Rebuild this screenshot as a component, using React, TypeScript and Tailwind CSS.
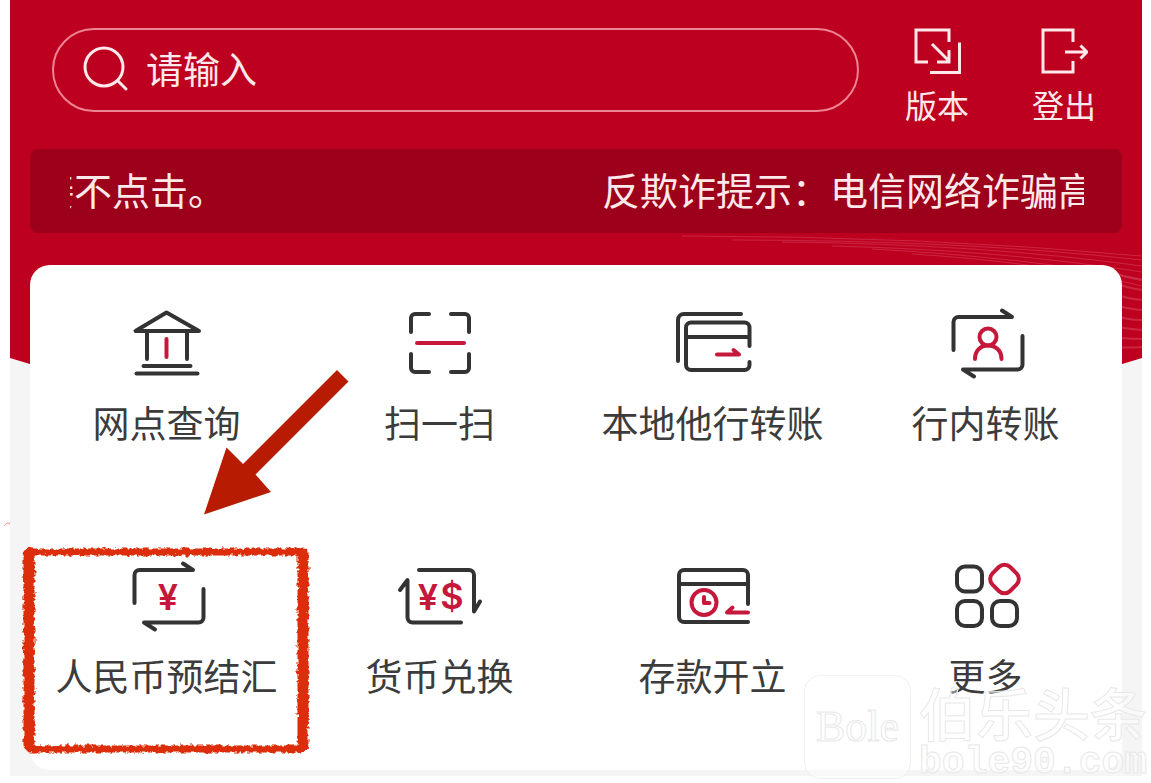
import React from 'react';

const INK = '#333333';
const RED = '#c5183a';

interface IconProps {
  children: React.ReactNode;
}

function TileIcon({ children }: IconProps) {
  return (
    <svg
      className="h-[72px] w-20 overflow-visible"
      viewBox="0 0 80 72"
      fill="none"
      stroke={INK}
      strokeWidth="4"
      strokeLinecap="round"
      strokeLinejoin="round"
      aria-hidden="true"
    >
      {children}
    </svg>
  );
}

const BranchIcon = () => (
  <TileIcon>
    <path d="M39.5 6.5 8.5 25h63.500L39.500 6.500Z" />
    <path d="M20 25v28M60 25v28M16.500 60h47M9.500 67.500h61" />
    <path d="M39.500 33v18" stroke={RED} />
  </TileIcon>
);

const ScanIcon = () => (
  <TileIcon>
    <path d="M11 26V12a4 4 0 0 1 4-4h14M51 8h14a4 4 0 0 1 4 4v14M69 48v14a4 4 0 0 1-4 4H51M29 66H15a4 4 0 0 1-4-4V48" />
    <path d="M17 37h47" stroke={RED} />
  </TileIcon>
);

const LocalTransferIcon = () => (
  <TileIcon>
    <path d="M5 55V14a6 6 0 0 1 6-6h57" />
    <path d="M76.500 40V21.500a5 5 0 0 0-5-5H18a5 5 0 0 0-5 5V59a5 5 0 0 0 5 5h53.500a5 5 0 0 0 5-5v-3M13 31h63" />
    <path d="M44 48.500h22L60.500 44" stroke={RED} />
  </TileIcon>
);

const LoopFrame = () => (
  <path d="M7.500 44V16a5 5 0 0 1 5-5H66L56 4.500M76.500 30v28.500a5 5 0 0 1-5 5H17L28 70.500" />
);

const InnerTransferIcon = () => (
  <TileIcon>
    <LoopFrame />
    <g stroke={RED}>
      <circle cx="42" cy="31" r="8.500" />
      <path d="M29 53c0-8.500 5.500-13.500 13-13.500S55.500 44.500 55.500 53" />
    </g>
  </TileIcon>
);

const SettleIcon = () => (
  <TileIcon>
    <LoopFrame />
    <text x="41" y="51" textAnchor="middle" fill={RED} stroke="none" className="font-['Inter',sans-serif] text-[36px] font-semibold">
      ¥
    </text>
  </TileIcon>
);

const ExchangeIcon = () => (
  <TileIcon>
    <path d="M19 11h50a5 5 0 0 1 5 5v36.500l6-10M0 31l7.500-10v37.500a5 5 0 0 0 5 5H61" />
    <g fill={RED} stroke="none" className="font-['Inter',sans-serif] text-[36px] font-semibold">
      <text x="28" y="51" textAnchor="middle">¥</text>
      <text x="52" y="50" textAnchor="middle">$</text>
    </g>
  </TileIcon>
);

const DepositIcon = () => (
  <TileIcon>
    <path d="M75 45V16a5 5 0 0 0-5-5H11a5 5 0 0 0-5 5v42a5 5 0 0 0 5 5h64M6 25h69" />
    <g stroke={RED}>
      <circle cx="31" cy="43.500" r="12.500" />
      <path d="M31 38v6h5.500M75 53.500H54l5.500-5" />
    </g>
  </TileIcon>
);

const MoreIcon = () => (
  <TileIcon>
    <rect x="11" y="7.500" width="25" height="25" rx="8" />
    <rect x="11" y="42" width="25" height="25" rx="8" />
    <rect x="46" y="42" width="25" height="25" rx="8" />
    <rect x="46" y="7.500" width="25" height="25" rx="8" transform="rotate(45 58.500 20)" stroke={RED} />
  </TileIcon>
);

// Hand-drawn marker box round the highlighted entry
function MarkerFrame() {
  return (
    <svg className="pointer-events-none absolute -top-3 -left-2 h-[205px] w-[287px] overflow-visible" viewBox="0 0 287 205" fill="none" aria-hidden="true">
      <filter id="rough" x="-5%" y="-5%" width="110%" height="110%">
        <feTurbulence type="fractalNoise" baseFrequency="0.25" numOctaves="2" seed="4" />
        <feDisplacementMap in="SourceGraphic" scale="6" />
      </filter>
      <g stroke="#dc2d0d" strokeLinecap="round" filter="url(#rough)">
        <path d="M4 5h278M8 202h270" strokeWidth="7" />
        <path d="M7 6v192M281 6v192" strokeWidth="11" />
      </g>
    </svg>
  );
}

function PointerArrow() {
  return (
    <svg className="pointer-events-none absolute top-16 left-[174px] h-[145px] w-[145px]" viewBox="0 0 145 145" aria-hidden="true">
      <path d="M0 144.500 22.500 77.500 39 94 133 0l11.500 11.500L51.500 104.500 67 122Z" fill="#b71c02" />
    </svg>
  );
}

const tiles = [
  { label: '网点查询', Icon: BranchIcon },
  { label: '扫一扫', Icon: ScanIcon },
  { label: '本地他行转账', Icon: LocalTransferIcon },
  { label: '行内转账', Icon: InnerTransferIcon },
  { label: '人民币预结汇', Icon: SettleIcon, marked: true },
  { label: '货币兑换', Icon: ExchangeIcon },
  { label: '存款开立', Icon: DepositIcon },
  { label: '更多', Icon: MoreIcon },
];

function HeaderBackdrop() {
  return (
    <div className="absolute inset-x-0 top-0 h-[420px] overflow-hidden bg-[#be0020] [clip-path:polygon(0_0,100%_0,100%_358px,50%_530px,0_358px)]">
      <svg className="absolute top-[232px] right-0 h-[140px] w-[500px]" viewBox="0 0 500 140" fill="none" stroke="#d4405a" strokeOpacity="0.6" aria-hidden="true">
        <path d="M40 4Q280 4 500 24M90 8q230 0 410 20M140 10q200 2 360 24M190 14q170 4 310 26M230 17q150 8 270 30M270 22q130 8 230 32" />
        <g strokeWidth="2">
          <path d="M470 40q15 6 30 8M470 50q15 6 30 8M470 61q15 6 30 7M470 72q15 5 30 6M470 83q15 5 30 5M470 94q15 3 30 4M470 105q15 2 30 2M470 115q15 1 30 0" />
        </g>
      </svg>
    </div>
  );
}

function Watermark() {
  return (
    <div className="pointer-events-none absolute right-1 bottom-1 flex items-center gap-2 text-white/40 select-none [-webkit-text-stroke:1px_#e8e8e8]">
      <div className="flex h-[104px] w-[107px] items-center justify-center rounded-2xl border border-[#f0f0f0] bg-white/40 font-['Liberation_Serif',serif] text-[44px]">
        Bole
      </div>
      <div className="w-[228px]">
        <div className="text-[57px] leading-[72px] font-medium">伯乐头条</div>
        <div className="font-['Liberation_Mono',monospace] text-[38px] leading-8 font-bold">bole90.com</div>
      </div>
    </div>
  );
}

export default function App() {
  return (
    <div className="relative overflow-hidden bg-white pr-[9px] pb-[7px] pl-[10px] font-['Noto_Sans_CJK_SC',sans-serif]">
      <svg className="absolute top-[521px] left-1 h-2 w-2" viewBox="0 0 8 8" fill="none" stroke="#f0a0a0" aria-hidden="true">
        <path d="M0 5 3 2l2 1M5 1l2 4" />
      </svg>

      <main className="relative bg-[#f5f5f5] px-5 pb-[6px]">
        <HeaderBackdrop />

        <header className="relative flex items-start pt-7 pr-[26px] pl-[22px] text-[#fde8ea]">
          <label className="flex h-[84px] min-w-0 flex-1 items-center gap-4 rounded-full border-2 border-[#ee8494] pb-1 pl-7">
            <svg className="h-12 w-12 shrink-0" viewBox="0 0 48 48" fill="none" stroke="currentColor" strokeWidth="3" strokeLinecap="round" aria-hidden="true">
              <circle cx="22" cy="23" r="19" />
              <path d="m36 37 8 8" />
            </svg>
            <input
              type="text"
              aria-label="搜索"
              placeholder="请输入"
              className="min-w-0 flex-1 bg-transparent text-[37px] leading-12 outline-none placeholder:text-[#fde8ea]"
            />
          </label>

          <nav className="ml-[46px] flex gap-[63px] text-[32px] leading-10">
            <button type="button" className="flex flex-col items-center gap-2">
              <svg className="h-12 w-12" viewBox="0 0 48 48" fill="none" stroke="currentColor" strokeWidth="3" aria-hidden="true">
                <path d="M36 14V2H3v32h12M46.500 14.500V44.500H17" />
                <path d="m19 16 17 17M36 22v12H24" />
              </svg>
              版本
            </button>
            <button type="button" className="flex flex-col items-center gap-2">
              <svg className="h-12 w-12" viewBox="0 0 48 48" fill="none" stroke="currentColor" strokeWidth="3" aria-hidden="true">
                <path d="M33 14V2H3v42h30V33" />
                <path d="M25 24h22M40.500 17.500 47 24l-6.500 6.500" />
              </svg>
              登出
            </button>
          </nav>
        </header>

        <section className="relative mt-[25px] h-[84px] rounded-lg bg-[#9c001a] pr-[38px] pl-10">
          <div className="flex justify-between overflow-hidden text-[38px] leading-20 whitespace-nowrap text-[#fde8ea]">
            <p className="-ml-[34px]">接不点击。</p>
            <p className="-mr-3">反欺诈提示：电信网络诈骗高</p>
          </div>
        </section>

        <section className="relative mt-8 grid grid-cols-4 gap-y-[113px] rounded-[20px] bg-white pt-[41px] pb-[71px]">
          {tiles.map(({ label, Icon, marked }, index) => (
            <div key={label} className="relative flex justify-center">
              <button type="button" className="flex flex-col items-center gap-5 text-[37px] leading-12 whitespace-nowrap text-[#3c3c3c]">
                <Icon />
                {label}
              </button>
              {index === 0 && <PointerArrow />}
              {marked && <MarkerFrame />}
            </div>
          ))}
        </section>
      </main>

      <Watermark />
    </div>
  );
}
